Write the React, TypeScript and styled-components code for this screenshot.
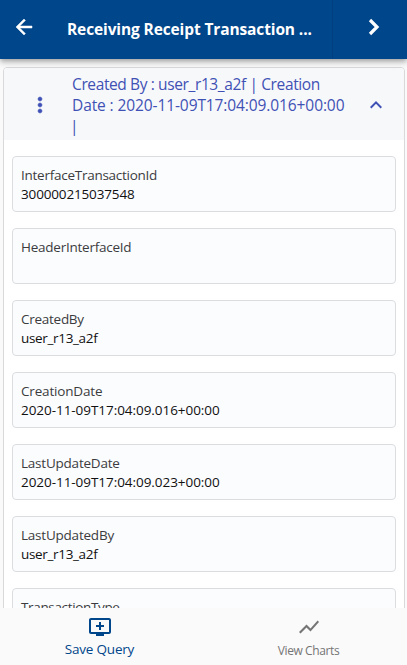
import React from "react";
import styled, { createGlobalStyle } from "styled-components";

const GlobalStyle = createGlobalStyle`
  *, *::before, *::after { box-sizing: border-box; }
  html, body { margin: 0; height: 100%; overflow: hidden; }
  body { background: #fafafa; font-family: "Open Sans", "Noto Sans", sans-serif; }
  button { font: inherit; border: 0; padding: 0; background: none; color: inherit; }
`;

const Screen = styled.div`
  height: 100vh;
  display: flex;
  flex-direction: column;
  overflow: hidden;
`;

const AppBar = styled.header`
  z-index: 1;
  flex: 0 0 59px;
  display: grid;
  grid-template-columns: 47px 1fr 75px;
  color: #fff;
  background: #00468b;
  box-shadow: 0 2px 4px -1px rgba(0, 0, 0, 0.2), 0 4px 5px rgba(0, 0, 0, 0.14), 0 1px 10px rgba(0, 0, 0, 0.12);
`;

const BarButton = styled.button<{ $divided?: boolean }>`
  display: flex;
  align-items: center;
  justify-content: center;
  padding-bottom: 5px;
  padding-left: ${(p) => (p.$divided ? "7px" : "0")};
  border-left: ${(p) => (p.$divided ? "1px solid #003f80" : "0")};
`;

const Title = styled.h1`
  margin: 0;
  padding: 0 0 1px 20px;
  align-self: center;
  white-space: nowrap;
  font-size: 15.5px;
  line-height: 24px;
  font-weight: 700;
  letter-spacing: -0.12px;
`;

const Content = styled.main`
  flex: 1;
  min-height: 0;
  overflow: hidden;
  padding: 8px 2px 0 3px;
`;

const Panel = styled.section`
  border: 1px solid #d9d9dc;
  border-radius: 4px;
  background: #fff;
  overflow: hidden;
`;

const PanelHeader = styled.div`
  height: 72px;
  display: grid;
  grid-template-columns: 68px 1fr 56px;
  align-items: center;
  background: #f7f8fa;
  color: #3f51b5;
`;

const Summary = styled.div`
  padding-top: 3px;
  font-size: 15.5px;
  line-height: 21px;
`;

const SummaryLine = styled.div<{ $track?: number; $indent?: number }>`
  white-space: nowrap;
  letter-spacing: ${(p) => p.$track ?? 0}px;
  text-indent: ${(p) => p.$indent ?? 0}px;
`;

const Slot = styled.div<{ $shift?: number }>`
  display: flex;
  justify-content: center;
  padding-top: 2px;
  padding-left: ${(p) => p.$shift ?? 0}px;
`;

const Fields = styled.div`
  display: flex;
  flex-direction: column;
  gap: 16px;
  padding: 16px 8px;
`;

const Field = styled.div`
  height: 56px;
  padding: 9px 8px 0;
  border: 1px solid #dcdddf;
  border-radius: 4px;
  background: #fbfcfe;
  font-size: 13.5px;
  line-height: 19px;
`;

const Label = styled.div<{ $track: number }>`
  color: #3c3c3e;
  white-space: nowrap;
  letter-spacing: ${(p) => p.$track}px;
`;

const Value = styled(Label)`
  color: #111;
`;

const BottomNav = styled.nav`
  z-index: 1;
  flex: 0 0 57px;
  display: grid;
  grid-template-columns: 199px 1fr;
  background: #fafafa;
`;

const NavItem = styled.button<{ $active?: boolean }>`
  display: flex;
  flex-direction: column;
  align-items: center;
  padding-top: 7px;
  padding-left: ${(p) => (p.$active ? 0 : 11)}px;
  color: ${(p) => (p.$active ? "#00468b" : "#757575")};
  font-size: ${(p) => (p.$active ? 13.5 : 12)}px;
  line-height: ${(p) => (p.$active ? 20 : 24)}px;
  letter-spacing: ${(p) => (p.$active ? -0.2 : -0.4)}px;
  white-space: nowrap;
`;

const Glyph = styled.svg<{ $bold?: boolean }>`
  fill: currentColor;
  stroke: currentColor;
  stroke-width: ${(p) => (p.$bold ? 0.5 : 0)};
`;

const Icon = ({ d, bold }: { d: string; bold?: boolean }) => (
  <Glyph width="24" height="24" viewBox="0 0 24 24" $bold={bold} aria-hidden="true">
    <path d={d} />
  </Glyph>
);

const icons = {
  back: "M20 11H7.83l5.59-5.59L12 4l-8 8 8 8 1.41-1.41L7.83 13H20v-2z",
  more: "M12 8c1.1 0 2-.9 2-2s-.9-2-2-2-2 .9-2 2 .9 2 2 2zm0 2c-1.1 0-2 .9-2 2s.9 2 2 2 2-.9 2-2-.9-2-2-2zm0 6c-1.1 0-2 .9-2 2s.9 2 2 2 2-.9 2-2-.9-2-2-2z",
  less: "M12 8l-6 6 1.41 1.41L12 10.83l4.59 4.58L18 14z",
  queue: "M21 3H3c-1.11 0-2 .89-2 2v12c0 1.1.89 2 2 2h5v2h8v-2h5c1.1 0 1.99-.9 1.99-2L23 5c0-1.11-.9-2-2-2zm0 14H3V5h18v12zm-5-7v2h-3v3h-2v-3H8v-2h3V7h2v3h3z",
  chart: "M3.5 18.49l6-6.01 4 4L22 6.92l-1.41-1.41-7.09 7.97-4-4L2 16.99z",
};

type FieldData = { label: string; value: string; lt: number; vt: number };

const fields: FieldData[] = [
  { label: "InterfaceTransactionId", value: "300000215037548", lt: -0.26, vt: -0.15 },
  { label: "HeaderInterfaceId", value: "", lt: -0.24, vt: 0 },
  { label: "CreatedBy", value: "user_r13_a2f", lt: -0.27, vt: -0.33 },
  { label: "CreationDate", value: "2020-11-09T17:04:09.016+00:00", lt: -0.17, vt: -0.05 },
  { label: "LastUpdateDate", value: "2020-11-09T17:04:09.023+00:00", lt: -0.22, vt: -0.05 },
  { label: "LastUpdatedBy", value: "user_r13_a2f", lt: -0.22, vt: -0.33 },
  { label: "TransactionType", value: "", lt: -0.35, vt: 0 },
];

export default function App() {
  return (
    <>
      <GlobalStyle />
      <Screen>
        <AppBar>
          <BarButton aria-label="Back"><Icon d={icons.back} bold /></BarButton>
          <Title>Receiving Receipt Transaction ...</Title>
          <BarButton $divided aria-label="Next">
            <svg width="12" height="18" viewBox="0 0 12 18" fill="none" stroke="currentColor" strokeWidth="3.2" aria-hidden="true">
              <path d="M2 2l7 7-7 7" />
            </svg>
          </BarButton>
        </AppBar>
        <Content>
          <Panel>
            <PanelHeader>
              <Slot $shift={4}><Icon d={icons.more} bold /></Slot>
              <Summary>
                <SummaryLine $track={-0.38}>Created By : user_r13_a2f | Creation</SummaryLine>
                <SummaryLine $track={-0.1}>Date : 2020-11-09T17:04:09.016+00:00</SummaryLine>
                <SummaryLine $indent={-2}>|</SummaryLine>
              </Summary>
              <Slot><Icon d={icons.less} /></Slot>
            </PanelHeader>
            <Fields>
              {fields.map((f) => (
                <Field key={f.label}>
                  <Label $track={f.lt}>{f.label}</Label>
                  <Value $track={f.vt}>{f.value}</Value>
                </Field>
              ))}
            </Fields>
          </Panel>
        </Content>
        <BottomNav>
          <NavItem $active><Icon d={icons.queue} />Save Query</NavItem>
          <NavItem><Icon d={icons.chart} />View Charts</NavItem>
        </BottomNav>
      </Screen>
    </>
  );
}
